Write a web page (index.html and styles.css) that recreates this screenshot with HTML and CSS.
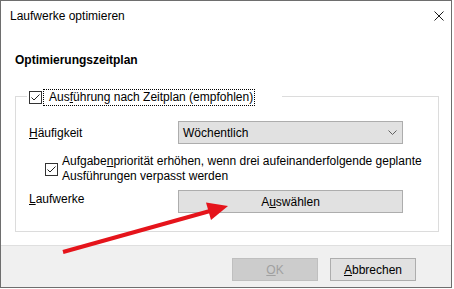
FILE: index.html
```html
<!DOCTYPE html>
<html lang="de">
<head>
  <meta charset="UTF-8">
  <title>Laufwerke optimieren</title>
  <link rel="stylesheet" href="styles.css">
</head>
<body>
  <div class="window">
    <div class="titlebar">
      <span class="title">Laufwerke optimieren</span>
      <svg class="close" width="10" height="10" viewBox="0 0 10 10">
        <path d="M0.5 0.5 L9.5 9.5 M9.5 0.5 L0.5 9.5" stroke="#1a1a1a" stroke-width="1" fill="none"/>
      </svg>
    </div>

    <div class="content">
      <div class="heading">Optimierungszeitplan</div>

      <div class="group">
        <div class="group-legend">
          <span class="checkbox">
            <svg width="11" height="11" viewBox="0 0 11 11">
              <polyline points="1.5,5.5 4,8 9.5,2.5" stroke="#222" stroke-width="1" fill="none"/>
            </svg>
          </span>
          <span class="focus-label">Aus<u>f</u>ührung nach Zeitplan (empfohlen)</span>
        </div>

        <div class="row first">
          <span class="row-label"><u>H</u>äufigkeit</span>
          <div class="combo">
            <span>Wöchentlich</span>
            <svg width="9" height="5" viewBox="0 0 9 5">
              <polyline points="0.5,0.5 4.5,4.5 8.5,0.5" stroke="#606060" stroke-width="1" fill="none"/>
            </svg>
          </div>
        </div>

        <div class="row option">
          <span class="checkbox">
            <svg width="11" height="11" viewBox="0 0 11 11">
              <polyline points="1.5,5.5 4,8 9.5,2.5" stroke="#222" stroke-width="1" fill="none"/>
            </svg>
          </span>
          <span class="option-label">Aufgabe<u>n</u>priorität erhöhen, wenn drei aufeinanderfolgende geplante<br>Ausführungen verpasst werden</span>
        </div>

        <div class="row drives">
          <span class="row-label"><u>L</u>aufwerke</span>
          <button class="btn wide">A<u>u</u>swählen</button>
        </div>
      </div>
    </div>

    <div class="footer">
      <button class="btn disabled"><u>O</u>K</button>
      <button class="btn"><u>A</u>bbrechen</button>
    </div>

    <!-- Roter Pfeil als Markierung -->
    <svg class="arrow" width="452" height="288" viewBox="0 0 452 288">
      <line x1="63" y1="252" x2="210" y2="211" stroke="#e5141b" stroke-width="4"/>
      <polygon points="228,206 211,220 206,202.5" fill="#e5141b"/>
    </svg>
  </div>
</body>
</html>
```

FILE: styles.css
```css
body {
  margin: 0;
  background: #fff;
  font-family: 'Liberation Sans', Arial, sans-serif;
  font-size: 12px;
  color: #000;
}

.window {
  position: relative;
  width: 452px;
  height: 288px;
  box-sizing: border-box;
  border: 1px solid #6e6e6e;
  background: #fff;
  display: flex;
  flex-direction: column;
}

.titlebar {
  height: 29px;
  flex: none;
  display: flex;
  align-items: center;
  justify-content: space-between;
  padding: 0 7px 0 9px;
}

.content {
  flex: 1;
  padding: 0 14px;
}

.heading {
  font-weight: bold;
  line-height: 16px;
  margin-top: 22px;
}

.group {
  width: 424px;
  box-sizing: border-box;
  margin-top: 28px;
  padding: 0 13px 18px;
  border: 1px solid #dcdcdc;
}

.group-legend {
  display: flex;
  align-items: center;
  width: fit-content;
  height: 17px;
  margin: -8px 0 0 -2px;
  padding: 0 28px 0 2px;
  background: #fff;
}

.checkbox {
  width: 13px;
  height: 13px;
  box-sizing: border-box;
  border: 1px solid #333;
  background: #fff;
  flex: none;
  display: flex;
}

.focus-label {
  margin-left: 2px;
  padding: 0 1px 0 5px;
  line-height: 15px;
  outline: 1px dotted #000;
}

.row {
  display: flex;
  align-items: center;
}

.row.first {
  margin-top: 15px;
}

.row-label {
  width: 149px;
  flex: none;
}

.combo {
  width: 225px;
  height: 23px;
  box-sizing: border-box;
  border: 1px solid #adadad;
  background: #e1e1e1;
  display: flex;
  align-items: center;
  justify-content: space-between;
  padding: 0 5px 0 4px;
}

.option {
  margin-top: 10px;
  padding-left: 16px;
}

.option-label {
  margin-left: 4px;
  line-height: 15px;
}

.drives {
  margin-top: 6px;
  align-items: flex-start;
}

.drives .row-label {
  padding-top: 2px;
}

.btn {
  height: 23px;
  width: 86px;
  box-sizing: border-box;
  border: 1px solid #adadad;
  background: #e1e1e1;
  font-family: inherit;
  font-size: 12px;
  color: #000;
  padding: 0;
}

.btn.wide {
  width: 225px;
}

.btn.disabled {
  background: #cccccc;
  border-color: #bfbfbf;
  color: #a0a0a0;
}

.footer {
  height: 42px;
  flex: none;
  box-sizing: border-box;
  border-top: 1px solid #dfdfdf;
  background: #f0f0f0;
  display: flex;
  justify-content: flex-end;
  gap: 12px;
  padding: 12px 35px 0 0;
}

.arrow {
  position: absolute;
  left: -1px;
  top: -1px;
  pointer-events: none;
}
```
